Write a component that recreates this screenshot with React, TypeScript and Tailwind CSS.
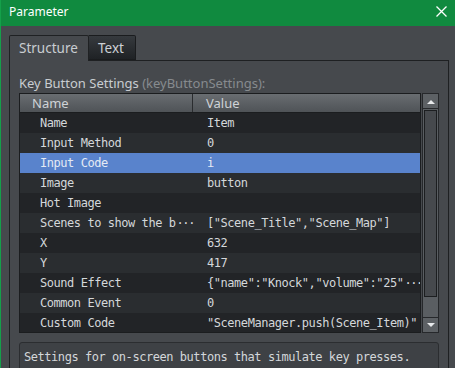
import * as React from 'react';

// [name, value, name cut off, value cut off]
const rows: [string, string, boolean, boolean][] = [
    ['Name', 'Item', false, false],
    ['Input Method', '0', false, false],
    ['Input Code', 'i', false, false],
    ['Image', 'button', false, false],
    ['Hot Image', '', false, false],
    ['Scenes to show the b', '["Scene_Title","Scene_Map"]', true, false],
    ['X', '632', false, false],
    ['Y', '417', false, false],
    ['Sound Effect', '{"name":"Knock","volume":"25"', false, true],
    ['Common Event', '0', false, false],
    ['Custom Code', '"SceneManager.push(Scene_Item)"', false, false],
];

const sans = { fontFamily: '"Noto Sans", "DejaVu Sans", sans-serif' };
const mono = { fontFamily: '"DejaVu Sans Mono", "Liberation Mono", monospace' };

function Dots() {
    return <span className="tracking-[-1.4px] ml-[1px]">···</span>;
}

function Arrow({ up }: { up?: boolean }) {
    return (
        <svg width="8" height="5" viewBox="0 0 8 5" className="block">
            {up ? (
                <path d="M0 5 L4 1 L8 5 Z" fill="#e8eaec" />
            ) : (
                <path d="M0 0 L4 4 L8 0 Z" fill="#e8eaec" />
            )}
        </svg>
    );
}

function Scrollbar() {
    return (
        <div className="flex flex-col w-[17px] h-[240px] ml-[1px] bg-[#34373a]">
            <div className="h-[16px] flex items-center justify-center bg-[#5d6165] border border-[#26282b]">
                <Arrow up />
            </div>
            <div className="flex-1 flex flex-col bg-[#5a5e62] border-x border-[#26282b]">
                <div className="h-[187px] mt-[1px] mx-[1px] bg-[#46494d] border border-[#1c1e20]" />
            </div>
            <div className="h-[16px] flex items-center justify-center bg-[#5d6165] border border-[#26282b]">
                <Arrow />
            </div>
        </div>
    );
}

function PropertyTable() {
    return (
        <div className="flex">
            <div className="w-[403px] h-[240px] border border-[#1b1d1f] bg-[#222427] overflow-hidden">
                <div
                    className="flex h-[19px] border-b border-[#1b1d1f] bg-gradient-to-b from-[#696d71] to-[#4f5357] text-[13px] text-[#cfd3d7]"
                    style={sans}
                >
                    <div className="w-[173px] pl-[12px] leading-[19px] border-r border-[#2a2c2f]">Name</div>
                    <div className="flex-1 pl-[13px] leading-[19px]">Value</div>
                </div>
                {rows.map(([name, value, nameCut, valueCut], i) => {
                    const selected = i === 2;
                    const bg = selected
                        ? 'bg-[#5983cc] text-[#e4eaf4]'
                        : i % 2 === 0
                          ? 'bg-[#222427] text-[#d4d7da]'
                          : 'bg-[#2a2d30] text-[#d4d7da]';
                    return (
                        <div
                            key={i}
                            className={`flex h-[20px] text-[12px] tracking-[-0.45px] leading-[20px] whitespace-nowrap ${bg}`}
                            style={mono}
                        >
                            <div className="w-[174px] shrink-0 pl-[20px]">
                                {name}
                                {nameCut && <Dots />}
                            </div>
                            <div className="flex-1 pl-[13px]">
                                {value}
                                {valueCut && <Dots />}
                            </div>
                        </div>
                    );
                })}
            </div>
            <Scrollbar />
        </div>
    );
}

export default function App() {
    return (
        <div className="w-[455px] h-[368px] overflow-hidden flex flex-col bg-[#46494d] border-l border-[#14a04a]" style={sans}>
            <div className="h-[26px] shrink-0 flex items-center justify-between bg-[#108a3f] -ml-px pl-[9px] pr-[8px]">
                <span className="text-[12px] text-white leading-none pb-[2px]">Parameter</span>
                <svg width="11" height="11" viewBox="0 0 11 11" className="mb-[3px]">
                    <path d="M0.5 0.5 L10.5 10.5 M10.5 0.5 L0.5 10.5" stroke="#ffffff" strokeWidth="1.3" />
                </svg>
            </div>

            <div className="flex-1 flex flex-col pl-[8px] pr-[6px] pt-[9px]">
                <div className="flex h-[25px] shrink-0 relative z-10">
                    <div className="w-[80px] h-[26px] border border-b-0 border-[#1f2123] rounded-t-[2px] bg-[#46494d] text-[13.5px] text-[#c9cdd1] pl-[9px] leading-[24px]">
                        Structure
                    </div>
                    <div className="w-[47px] h-[25px] border border-l-0 border-[#1a1c1e] rounded-tr-[2px] bg-gradient-to-b from-[#363a3e] to-[#1f2225] text-[13.5px] text-[#ccd0d4] pl-[9px] leading-[24px]">
                        Text
                    </div>
                </div>
                <div className="flex-1 border border-[#1e2022] pt-[13px] px-[9px]">
                    <div className="h-[18px] leading-[18px] mb-[1px] text-[13px] text-[#c9cdd1] whitespace-nowrap">
                        Key Button Settings <span className="text-[#878b8f]">(keyButtonSettings):</span>
                    </div>
                    <PropertyTable />
                    <div className="mt-[9px] h-[40px] border border-[#2b2d30] rounded-[3px] bg-[#3e4145] pl-[4px] pt-[5px]">
                        <div className="text-[12px] tracking-[-0.45px] leading-[18px] text-[#d4d7da] whitespace-nowrap" style={mono}>
                            Settings for on-screen buttons that simulate key presses.
                        </div>
                    </div>
                </div>
            </div>
        </div>
    );
}
